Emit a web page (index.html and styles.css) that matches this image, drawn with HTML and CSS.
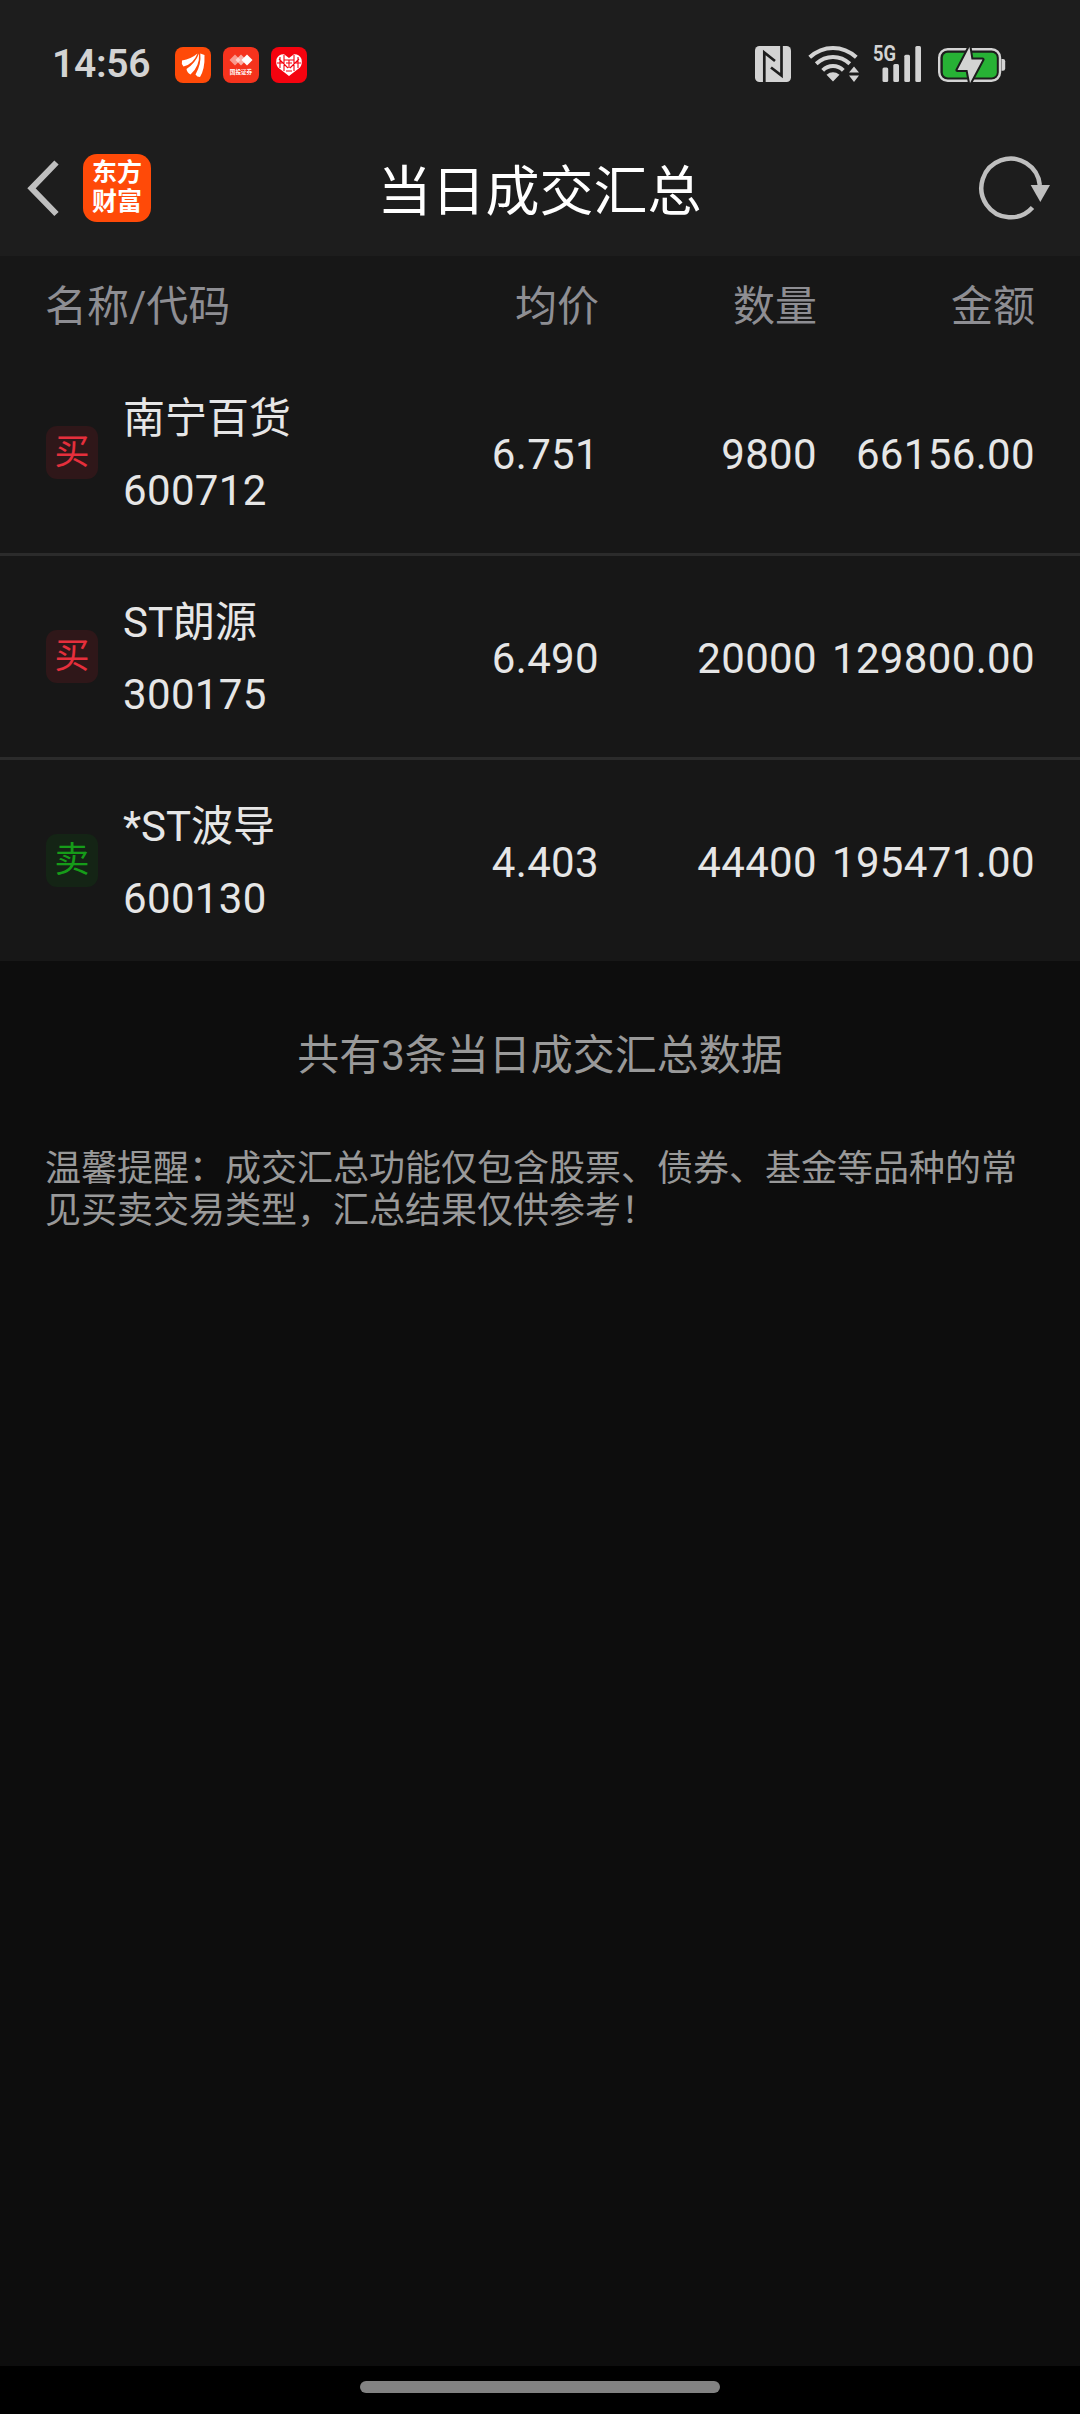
FILE: index.html
```html
<!DOCTYPE html>
<html lang="zh-CN">
<head>
  <meta charset="UTF-8">
  <meta name="viewport" content="width=device-width, initial-scale=1.0">
  <title>当日成交汇总</title>
  <link rel="stylesheet" href="styles.css">
</head>
<body>
  <div class="status">
    <span class="time">14:56</span>
    <div class="apps">
      <svg class="app" viewBox="0 0 36 36">
        <rect width="36" height="36" rx="8" fill="#ff4a08"/>
        <g fill="#fff">
          <path d="M7 13.500Q16 12 22.500 6.500Q18.500 17 8.500 19.500Q6 16.500 7 13.500z"/>
          <path d="M11.500 22Q20.500 16 24 6.500Q25 19 15.500 27.500Q12 25.500 11.500 22z"/>
          <path d="M20.500 27.500Q26.500 17 25.300 6.500L29.500 8Q30 22 25 30Q22 30 20.500 27.500z"/>
        </g>
      </svg>
      <svg class="app" viewBox="0 0 36 36">
        <rect width="36" height="36" rx="8" fill="#f5331d"/>
        <path d="M12 7.500l5.500 5.500-5.500 5.500L6.500 13z" fill="#fff" opacity=".5"/>
        <path d="M18 7.500l5.500 5.500-5.500 5.500-5.500-5.500z" fill="#fff" opacity=".6"/>
        <path d="M24 7.500L29.500 13l-5.500 5.500L18.500 13z" fill="#fff"/>
        <text x="18" y="26.500" class="app-text">国投证券</text>
      </svg>
      <svg class="app" viewBox="0 0 36 36">
        <rect width="36" height="36" rx="8" fill="#f5030f"/>
        <path d="M18 29L7 20.500Q4.500 17.500 5.500 12Q7.500 7 13 7.200L18 11L23 7.200Q28.500 7 30.500 12Q31.500 17.500 29 20.500z" fill="#fff"/>
        <path d="M9 10v11M13 8v16M23 8v16M27 10v11M6 16h7M23 16h7M8 12l9 9M28 12l-9 9M13 13h10M15 16h6M18 13v8M15 24h6" fill="none" stroke="#f5030f" stroke-width="1.100"/>
      </svg>
    </div>
    <div class="system">
      <svg class="nfc" viewBox="0 0 36 36">
        <rect width="36" height="36" rx="4.500" fill="#d3d3d3"/>
        <path d="M9.300 36V6.500L20 15M26.500 0v29.500L16 21.500" fill="none" stroke="#1d1d1d" stroke-width="2.700"/>
      </svg>
      <svg class="wifi" viewBox="0 0 52 38">
        <g fill="none" stroke="#d3d3d3" stroke-width="4">
          <path d="M1.700 12.300Q12 3 25 3T48.300 12.300"/>
          <path d="M8.200 18.800Q15.500 12 25 12T41.800 18.800"/>
          <path d="M14.700 25.300Q19 21 25 21T35.300 25.300"/>
        </g>
        <path d="M18.500 29.700Q25 25 31.500 29.700L25 36.500zM46 21.500l5 6H41zM46 37l5-6.500H41z" fill="#d3d3d3"/>
      </svg>
      <svg class="signal" viewBox="0 -8 50 46">
        <g fill="#d3d3d3">
          <rect x="10.500" y="23.500" width="5.700" height="14.500" rx="1.500"/>
          <rect x="21.300" y="20" width="5.700" height="18" rx="1.500"/>
          <rect x="32.300" y="10.700" width="5.700" height="27.300" rx="1.500"/>
          <rect x="43.300" y="2" width="5.700" height="36" rx="1.500"/>
        </g>
        <text x="1" y="17.300" class="net" textLength="23" lengthAdjust="spacingAndGlyphs">5G</text>
      </svg>
      <svg class="battery" viewBox="0 0 69 38">
        <rect x="2.200" y="3.200" width="60.800" height="31.600" rx="8.500" fill="none" stroke="#d3d3d3" stroke-width="2.400"/>
        <path d="M64.500 13h1.500q2.200 0 2.200 2.200v7.300q0 2.200-2.200 2.200h-1.500z" fill="#d3d3d3"/>
        <rect x="5.800" y="6.800" width="54" height="24.600" rx="5" fill="#27b235"/>
        <path d="M32.500 1L20.500 24H30.500L33 37L45.500 13.500H34.500z" fill="#d3d3d3" stroke="#1d1d1d" stroke-width="4" paint-order="stroke" stroke-linejoin="round"/>
      </svg>
    </div>
  </div>

  <div class="header">
    <div class="left">
      <svg class="back" viewBox="0 0 36 60">
        <path d="M32.500 4.500L7.500 30.300L32.500 56" fill="none" stroke="#bfbfbf" stroke-width="6"/>
      </svg>
      <div class="logo">东方<br>财富</div>
    </div>
    <h1>当日成交汇总</h1>
    <svg class="refresh" viewBox="0 0 72 66">
      <path d="M61.800 30A29.300 29.300 0 1 0 54.500 52.500" fill="none" stroke="#bfbfbf" stroke-width="4.500"/>
      <path d="M52.700 30h19.300L62.300 47z" fill="#bfbfbf"/>
    </svg>
  </div>

  <div class="table">
    <div class="thead">
      <div>名称/代码</div>
      <div class="right">均价</div>
      <div class="right">数量</div>
      <div class="right">金额</div>
    </div>
    <div class="row">
      <div class="stock">
        <span class="tag buy">买</span>
        <div class="name">南宁百货<br><span class="code">600712</span></div>
      </div>
      <div class="num">6.751</div>
      <div class="num">9800</div>
      <div class="num">66156.00</div>
    </div>
    <div class="row">
      <div class="stock">
        <span class="tag buy">买</span>
        <div class="name">ST朗源<br><span class="code">300175</span></div>
      </div>
      <div class="num">6.490</div>
      <div class="num">20000</div>
      <div class="num">129800.00</div>
    </div>
    <div class="row">
      <div class="stock">
        <span class="tag sell">卖</span>
        <div class="name">*ST波导<br><span class="code">600130</span></div>
      </div>
      <div class="num">4.403</div>
      <div class="num">44400</div>
      <div class="num">195471.00</div>
    </div>
  </div>

  <p class="total">共有3条当日成交汇总数据</p>
  <p class="tips">温馨提醒：成交汇总功能仅包含股票、债券、基金等品种的常见买卖交易类型，汇总结果仅供参考！</p>

  <div class="navbar"><div class="pill"></div></div>
</body>
</html>
```
FILE: styles.css
```css
* {
  box-sizing: border-box;
}
body {
  margin: 0;
  height: 2414px;
  display: flex;
  flex-direction: column;
  background-color: #0d0d0d;
  color: #e6e6e6;
  font-family: Roboto, "Noto Sans CJK SC", sans-serif;
  font-size: 42px;
  font-weight: 400;
}
svg {
  display: block;
}

/* status bar */
.status {
  height: 128px;
  padding: 44px 74px 0 52px;
  display: flex;
  align-items: flex-start;
  background-color: #1d1d1d;
}
.time {
  width: 123px;
  font-size: 39px;
  font-weight: 600;
  line-height: 40px;
  letter-spacing: -0.3px;
  color: #d3d3d3;
}
.apps {
  display: flex;
  gap: 12px;
  padding-top: 3px;
}
.app {
  width: 36px;
  height: 36px;
}
.app-text {
  font-size: 5.6px;
  font-weight: 700;
  fill: #fff;
  text-anchor: middle;
}
.system {
  display: flex;
  margin-left: auto;
}
.nfc {
  width: 36px;
  height: 36px;
  margin: 2px 17px 0 0;
}
.wifi {
  width: 52px;
  height: 38px;
  margin: 1px 12px 0 0;
}
.signal {
  width: 50px;
  height: 46px;
  margin: -8px 15px 0 0;
}
.net {
  font-size: 22px;
  font-weight: 700;
  fill: #d3d3d3;
}
.battery {
  width: 69px;
  height: 38px;
  margin-top: 2px;
}

/* title bar */
.header {
  height: 128px;
  padding: 0 30px 8px 24px;
  display: grid;
  grid-template-columns: 1fr auto 1fr;
  align-items: center;
  background-color: #1d1d1d;
}
.left {
  display: flex;
  align-items: center;
}
.back {
  width: 36px;
  height: 60px;
  margin-right: 23px;
}
.logo {
  width: 68px;
  height: 68px;
  padding-top: 4px;
  border-radius: 14px;
  background-color: #ff4a08;
  color: #fff;
  font-size: 25px;
  font-weight: 700;
  line-height: 29px;
  text-align: center;
}
.header h1 {
  margin: 9px 0 0 5px;
  font-size: 54px;
  font-weight: 400;
  line-height: 60px;
  color: #fff;
}
.refresh {
  width: 72px;
  height: 66px;
  justify-self: end;
}

/* deals */
.table {
  background-color: #171717;
}
.thead,
.row {
  display: grid;
  grid-template-columns: 1fr 218px 218px 218px;
  align-items: center;
  padding: 0 45px;
}
.thead {
  height: 96px;
  padding-bottom: 4px;
  color: #8e8e93;
}
.row {
  height: 201px;
}
.row + .row {
  height: 204px;
  border-top: 3px solid #2b2b2b;
}
.right {
  text-align: right;
}
.num {
  padding-top: 4px;
  text-align: right;
  letter-spacing: 0.35px;
}
.stock {
  display: flex;
  align-items: center;
  line-height: 72px;
}
.name {
  padding-top: 5px;
}
.code {
  letter-spacing: 0.35px;
}
.tag {
  width: 52px;
  height: 53px;
  margin: 0 25px 0 1px;
  border-radius: 11px;
  font-size: 35px;
  line-height: 54px;
  text-align: center;
}
.buy {
  background-color: #2f1719;
  color: #e52f3c;
}
.sell {
  background-color: #142415;
  color: #169c19;
}

.total {
  margin: 70px 0 0;
  line-height: 50px;
  text-align: center;
  color: #999;
}
.tips {
  margin: 67px 45px 0;
  font-size: 36px;
  line-height: 42px;
  color: #999;
}

.navbar {
  height: 48px;
  margin-top: auto;
  padding-top: 15px;
  background-color: #000;
}
.pill {
  width: 360px;
  height: 12px;
  margin: 0 auto;
  border-radius: 6px;
  background-color: #828282;
}
```
